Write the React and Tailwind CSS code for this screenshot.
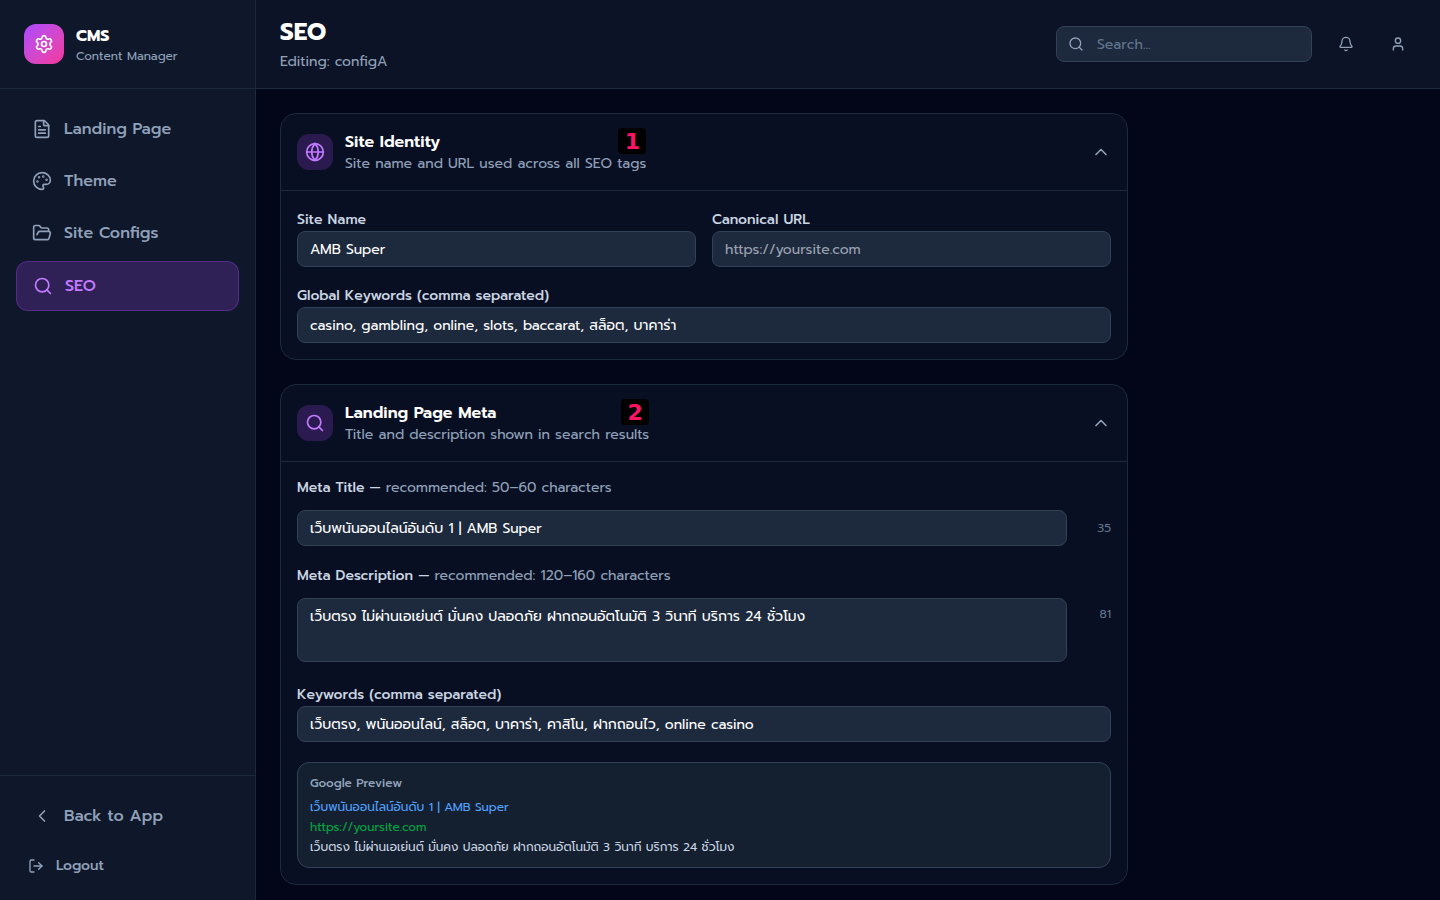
import { useState } from "react";
import {
  Bell, ChevronLeft, ChevronUp, FileText, FolderOpen, Globe,
  LogOut, Palette, Search, Settings, User,
} from "lucide-react";

const navItems = [
  { label: "Landing Page", icon: FileText },
  { label: "Theme", icon: Palette },
  { label: "Site Configs", icon: FolderOpen },
  { label: "SEO", icon: Search, active: true },
];

const fieldClass =
  "w-full rounded-lg border border-slate-700 bg-slate-800 px-3 text-sm text-white placeholder:text-gray-400 outline-none focus:border-purple-500";

function Sidebar() {
  return (
    <aside className="flex w-64 shrink-0 flex-col border-r border-slate-800 bg-slate-900">
      <div className="flex items-center gap-3 border-b border-slate-800 p-6">
        <div className="flex size-10 items-center justify-center rounded-xl bg-linear-to-br from-[#ad46ff] to-[#f6339a]">
          <Settings className="size-5 text-white" />
        </div>
        <div>
          <p className="text-base leading-6 font-bold text-white">CMS</p>
          <p className="text-xs leading-4 text-slate-400">Content Manager</p>
        </div>
      </div>
      <nav className="flex flex-1 flex-col gap-1 p-4">
        {navItems.map(({ label, icon: Icon, active }) => (
          <a
            key={label}
            href="#"
            aria-current={active ? "page" : undefined}
            className={
              active
                ? "flex items-center gap-3 rounded-xl border border-purple-500/30 bg-purple-500/20 px-4 py-3 font-medium text-purple-400"
                : "flex items-center gap-3 rounded-xl px-4 py-3 font-medium text-slate-400 hover:bg-slate-800"
            }
          >
            <Icon className="size-5" />
            {label}
          </a>
        ))}
      </nav>
      <div className="flex flex-col gap-2 border-t border-slate-800 p-4">
        <a href="#" className="flex items-center gap-3 rounded-xl px-4 py-3 font-medium text-slate-400 hover:bg-slate-800">
          <ChevronLeft className="size-5" />
          Back to App
        </a>
        <button type="button" className="flex h-9 items-center gap-3 rounded-lg px-3 text-sm font-medium text-slate-400 hover:bg-slate-800">
          <LogOut className="size-4" />
          Logout
        </button>
      </div>
    </aside>
  );
}

function Header() {
  return (
    <header className="flex items-center justify-between border-b border-slate-800 bg-slate-900/80 px-6 py-4">
      <div>
        <h1 className="text-2xl leading-8 font-bold text-white">SEO</h1>
        <p className="mt-1 text-sm leading-5 text-slate-400">Editing: configA</p>
      </div>
      <div className="flex items-center gap-4">
        <div className="relative w-64">
          <Search className="absolute top-1/2 left-3 size-4 -translate-y-1/2 text-slate-400" />
          <input
            type="text"
            aria-label="Search"
            placeholder="Search..."
            className="block h-9 w-full rounded-lg border border-slate-700 bg-slate-800 pr-3 pl-10 text-sm text-white outline-none placeholder:text-slate-500"
          />
        </div>
        <button type="button" aria-label="Notifications" className="flex size-9 items-center justify-center rounded-lg text-slate-400">
          <Bell className="size-4" />
        </button>
        <button type="button" aria-label="Account" className="flex size-9 items-center justify-center rounded-lg text-slate-400">
          <User className="size-4" />
        </button>
      </div>
    </header>
  );
}

function Section({ icon: Icon, title, subtitle, badge, children }) {
  const [open, setOpen] = useState(true);
  return (
    <section className="rounded-2xl border border-slate-800 bg-slate-900/50">
      <button
        type="button"
        aria-expanded={open}
        onClick={() => setOpen(!open)}
        className="flex w-full items-center justify-between border-b border-slate-800 p-4 text-left"
      >
        <span className="flex items-center gap-3">
          <span className="flex size-9 items-center justify-center rounded-xl bg-purple-500/20 text-purple-400">
            <Icon className="size-5" />
          </span>
          <span className="relative block">
            <span className="block text-base leading-6 font-semibold text-white">{title}</span>
            <span className="block text-sm leading-5 text-slate-400">{subtitle}</span>
            <span className="absolute -top-0.5 right-0 flex h-[26px] w-7 items-center justify-center rounded-sm bg-black font-['DejaVu_Sans',sans-serif] text-[22px] font-bold text-[#ff1464]">
              {badge}
            </span>
          </span>
        </span>
        <ChevronUp className={open ? "size-5 text-slate-400" : "size-5 rotate-180 text-slate-400"} />
      </button>
      {open && children}
    </section>
  );
}

function TextField({ id, label, ...props }) {
  return (
    <div className="text-base leading-6">
      <label htmlFor={id} className="text-sm leading-5 font-medium text-slate-300">{label}</label>
      <input id={id} type="text" className={`${fieldClass} block h-9`} {...props} />
    </div>
  );
}

function HintLabel({ id, label, hint }) {
  return (
    <label htmlFor={id} className="mb-3 block text-sm leading-5 font-medium text-slate-300">
      {label} — <span className="font-normal text-slate-400">{hint}</span>
    </label>
  );
}

export default function App() {
  const [title, setTitle] = useState("เว็บพนันออนไลน์อันดับ 1 | AMB Super");
  const [description, setDescription] = useState(
    "เว็บตรง ไม่ผ่านเอเย่นต์ มั่นคง ปลอดภัย ฝากถอนอัตโนมัติ 3 วินาที บริการ 24 ชั่วโมง"
  );
  return (
    <div className="flex h-screen bg-slate-950 font-[Prompt,'Noto_Sans','Noto_Sans_Thai',sans-serif] text-white">
      <Sidebar />
      <div className="flex min-w-0 flex-1 flex-col">
        <Header />
        <main className="flex-1 overflow-y-auto [scrollbar-width:none]">
          <div className="flex max-w-4xl flex-col gap-6 p-6">
            <Section icon={Globe} title="Site Identity" subtitle="Site name and URL used across all SEO tags" badge="1">
              <div className="flex flex-col gap-4 p-4">
                <div className="grid grid-cols-2 gap-4">
                  <TextField id="site-name" label="Site Name" defaultValue="AMB Super" />
                  <TextField id="canonical-url" label="Canonical URL" placeholder="https://yoursite.com" />
                </div>
                <TextField
                  id="global-keywords"
                  label="Global Keywords (comma separated)"
                  defaultValue="casino, gambling, online, slots, baccarat, สล็อต, บาคาร่า"
                />
              </div>
            </Section>
            <Section icon={Search} title="Landing Page Meta" subtitle="Title and description shown in search results" badge="2">
              <div className="flex flex-col gap-5 p-4">
                <div>
                  <HintLabel id="meta-title" label="Meta Title" hint="recommended: 50–60 characters" />
                  <div className="flex items-center gap-3">
                    <input id="meta-title" type="text" value={title} onChange={(e) => setTitle(e.target.value)} className={`${fieldClass} block h-9`} />
                    <span className="w-8 shrink-0 text-right text-xs leading-4 text-slate-500">{title.length}</span>
                  </div>
                </div>
                <div>
                  <HintLabel id="meta-description" label="Meta Description" hint="recommended: 120–160 characters" />
                  <div className="flex items-start gap-3">
                    <textarea
                      id="meta-description"
                      value={description}
                      onChange={(e) => setDescription(e.target.value)}
                      className={`${fieldClass} block h-16 resize-none py-2 leading-5`}
                    />
                    <span className="w-8 shrink-0 pt-2 text-right text-xs leading-4 text-slate-500">{description.length}</span>
                  </div>
                </div>
                <TextField
                  id="meta-keywords"
                  label="Keywords (comma separated)"
                  defaultValue="เว็บตรง, พนันออนไลน์, สล็อต, บาคาร่า, คาสิโน, ฝากถอนไว, online casino"
                />
                <div className="flex flex-col gap-1 rounded-xl border border-slate-700 bg-[#141f30] p-3 text-xs leading-4">
                  <p className="mb-1 font-medium text-slate-400">Google Preview</p>
                  <p className="text-blue-400">{title}</p>
                  <p className="text-green-600">https://yoursite.com</p>
                  <p className="text-slate-300">{description}</p>
                </div>
              </div>
            </Section>
          </div>
        </main>
      </div>
    </div>
  );
}
